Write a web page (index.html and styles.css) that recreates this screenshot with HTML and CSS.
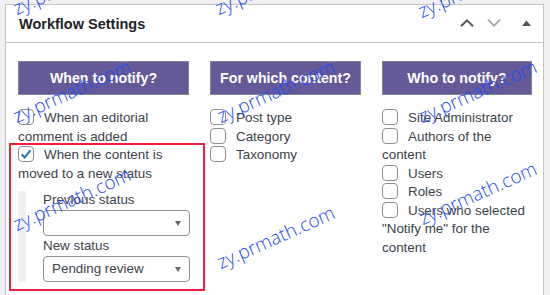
FILE: index.html
```html
<!DOCTYPE html>
<html>
<head>
<meta charset="utf-8">
<link rel="stylesheet" href="styles.css">
</head>
<body>
<div class="panel">
  <div class="panel-head">
    <h2 class="panel-title">Workflow Settings</h2>
    <div class="head-tools">
      <svg class="chev" width="14" height="8" viewBox="0 0 14 8"><path d="M1 7.2 L7 1.4 L13 7.2" fill="none" stroke="#50575e" stroke-width="2"/></svg>
      <svg class="chev" width="14" height="8" viewBox="0 0 14 8"><path d="M1 0.8 L7 6.6 L13 0.8" fill="none" stroke="#a7aaad" stroke-width="2"/></svg>
      <svg class="tri" width="9" height="6" viewBox="0 0 9 6"><polygon points="0,6 4.5,0.5 9,6" fill="#50575e"/></svg>
    </div>
  </div>
  <div class="panel-body">
    <div class="cols">
      <div class="col">
        <div class="col-btn">When to notify?</div>
        <div class="opts">
          <div class="opt"><span class="cb"></span>When an editorial comment is added</div>
          <div class="opt"><span class="cb"><svg width="14" height="14" viewBox="0 0 14 14"><path d="M2.6 7.4 L5.6 10.4 L11.4 3.4" fill="none" stroke="#2271b1" stroke-width="2"/></svg></span>When the content is moved to a new status</div>
          <div class="sub">
            <div class="sub-label">Previous status</div>
            <div class="select"><span></span><i class="arrow"></i></div>
            <div class="sub-label">New status</div>
            <div class="select"><span>Pending review</span><i class="arrow"></i></div>
          </div>
        </div>
      </div>
      <div class="col">
        <div class="col-btn">For which content?</div>
        <div class="opts">
          <div class="opt"><span class="cb"></span>Post type</div>
          <div class="opt"><span class="cb"></span>Category</div>
          <div class="opt"><span class="cb"></span>Taxonomy</div>
        </div>
      </div>
      <div class="col">
        <div class="col-btn">Who to notify?</div>
        <div class="opts">
          <div class="opt"><span class="cb"></span>Site Administrator</div>
          <div class="opt"><span class="cb"></span>Authors of the content</div>
          <div class="opt"><span class="cb"></span>Users</div>
          <div class="opt"><span class="cb"></span>Roles</div>
          <div class="opt"><span class="cb"></span>Users who selected "Notify me" for the content</div>
        </div>
      </div>
    </div>
  </div>
</div>
<div class="highlight"></div>
<span class="wm wm1">zy.prmath.com</span>
<span class="wm wm2">zy.prmath.com</span>
<span class="wm wm3">zy.prmath.com</span>
<span class="wm wm4">zy.prmath.com</span>
<span class="wm wm5">zy.prmath.com</span>
<span class="wm wm6">zy.prmath.com</span>
<span class="wm wm7">zy.prmath.com</span>
<span class="wm wm8">zy.prmath.com</span>
<span class="wm wm9">zy.prmath.com</span>
</body>
</html>
```
FILE: styles.css
```css
html, body {
  margin: 0;
  padding: 0;
}
body {
  background: #f0f0f1;
  font-family: "Liberation Sans", Arial, sans-serif;
  color: #3c434a;
  width: 550px;
  height: 295px;
  overflow: hidden;
  position: relative;
}
.panel {
  margin: 4px 6px 0 5px;
  background: #fff;
  border: 1px solid #c3c4c7;
  height: 320px;
}
.panel-head {
  display: flex;
  align-items: center;
  height: 37px;
  border-bottom: 1px solid #c3c4c7;
  padding: 0 12px 0 13px;
}
.panel-title {
  margin: 0;
  font-size: 14.5px;
  font-weight: bold;
  color: #1d2327;
}
.head-tools {
  margin-left: auto;
  display: flex;
  align-items: center;
  margin-top: -1px;
}
.chev { display: block; margin-right: 13px; }
.chev + .chev { margin-right: 21px; }
.tri { display: block; }
.panel-body {
  padding: 18px 12px 0 12px;
}
.cols {
  display: grid;
  grid-template-columns: 171px 151px 150px;
  column-gap: 21px;
  align-items: start;
}
.col-btn {
  height: 32px;
  background: #655997;
  border: 1px solid #7e8993;
  color: #fff;
  font-weight: bold;
  font-size: 14.2px;
  display: flex;
  align-items: center;
  justify-content: center;
}
.opts {
  margin-top: 14px;
  font-size: 13.4px;
  line-height: 18.5px;
}
.opt {
  display: block;
}
.cb {
  display: inline-block;
  box-sizing: border-box;
  width: 16px;
  height: 16px;
  border: 1px solid #8c8f94;
  border-radius: 4px;
  vertical-align: -3px;
  margin-right: 10px;
  position: relative;
  background: #fff;
}
.cb svg {
  position: absolute;
  left: 0;
  top: 0;
}
.sub {
  margin-top: 8px;
  border-left: 8px solid #f0f0f1;
  padding-left: 17px;
}
.sub-label {
  line-height: 18px;
}
.select {
  box-sizing: border-box;
  width: 147px;
  height: 26px;
  margin: 1px 0 1px;
  border: 1px solid #8c8f94;
  border-radius: 4px;
  display: flex;
  align-items: center;
  padding-left: 8px;
  position: relative;
}
.select + .sub-label { margin-top: 1px; }
.arrow {
  position: absolute;
  right: 8px;
  top: 10px;
  width: 0;
  height: 0;
  border-left: 3.5px solid transparent;
  border-right: 3.5px solid transparent;
  border-top: 5px solid #646970;
}
.highlight {
  position: absolute;
  left: 9px;
  top: 143px;
  width: 192px;
  height: 144px;
  border: 2px solid #f0203c;
}
.wm {
  position: absolute;
  font-family: "Open Sans", "Liberation Sans", sans-serif;
  font-weight: 300;
  font-size: 19px;
  line-height: 20px;
  color: #1f4df5;
  transform: rotate(-24deg);
  transform-origin: 0 100%;
  white-space: nowrap;
}
.wm1 { left: 18px; top: -2px; }
.wm2 { left: 220px; top: -2px; }
.wm3 { left: 423px; top: 1px; }
.wm4 { left: 18px; top: 106px; }
.wm5 { left: 222px; top: 106px; }
.wm6 { left: 424px; top: 106px; }
.wm7 { left: 18px; top: 214px; }
.wm8 { left: 222px; top: 252px; }
.wm9 { left: 424px; top: 208px; }
```
